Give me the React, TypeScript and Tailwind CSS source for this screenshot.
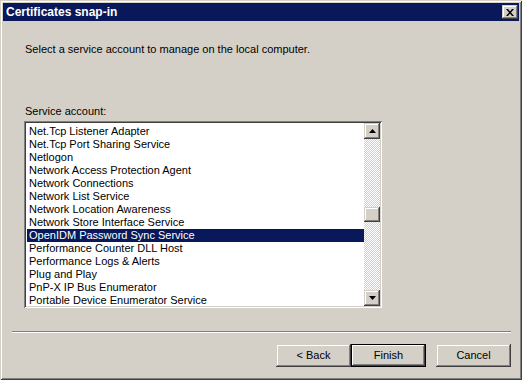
import React from 'react';

const items = [
  'Net.Tcp Listener Adapter',
  'Net.Tcp Port Sharing Service',
  'Netlogon',
  'Network Access Protection Agent',
  'Network Connections',
  'Network List Service',
  'Network Location Awareness',
  'Network Store Interface Service',
  'OpenIDM Password Sync Service',
  'Performance Counter DLL Host',
  'Performance Logs & Alerts',
  'Plug and Play',
  'PnP-X IP Bus Enumerator',
  'Portable Device Enumerator Service',
];

const raised =
  'shadow-[inset_-1px_-1px_#404040,inset_1px_1px_#d4d0c8,inset_-2px_-2px_#808080,inset_2px_2px_#ffffff]';

const ScrollButton = ({ down }: { down?: boolean }) => (
  <div className={`h-[16px] w-[16px] shrink-0 bg-[#d4d0c8] flex items-center justify-center ${raised}`}>
    <svg width="7" height="4" viewBox="0 0 7 4">
      {down ? <polygon points="0,0 7,0 3.5,4" fill="#000" /> : <polygon points="3.5,0 7,4 0,4" fill="#000" />}
    </svg>
  </div>
);

const Button = ({ label, def }: { label: string; def?: boolean }) => (
  <button
    className={`h-[23px] w-[75px] bg-[#d4d0c8] text-[11px] text-black ${
      def
        ? 'border border-black shadow-[inset_-1px_-1px_#404040,inset_1px_1px_#ffffff,inset_-2px_-2px_#808080]'
        : raised
    }`}
  >
    {label}
  </button>
);

export default function App() {
  return (
    <div
      className="w-[522px] h-[380px] bg-[#d4d0c8] p-[3px] flex flex-col overflow-hidden shadow-[inset_1px_1px_#d4d0c8,inset_-1px_-1px_#404040,inset_2px_2px_#ffffff,inset_-2px_-2px_#808080]"
      style={{ fontFamily: "'Liberation Sans', Arial, sans-serif" }}
    >
      {/* Title bar */}
      <div className="h-[18px] bg-[#08185a] flex items-center justify-between pl-[3px] pr-[1px] shrink-0">
        <span className="text-white text-[12px] font-bold">Certificates snap-in</span>
        <div className={`h-[14px] w-[16px] bg-[#d4d0c8] flex items-center justify-center ${raised}`}>
          <svg width="8" height="7" viewBox="0 0 8 7">
            <path d="M0 0h2l2 2.5L6 0h2L5 3.5 8 7H6L4 4.5 2 7H0l3-3.5z" fill="#000" />
          </svg>
        </div>
      </div>

      {/* Body */}
      <div className="flex flex-col pl-[22px] pt-[22px]">
        <p className="text-[11px] leading-[13px] text-black">Select a service account to manage on the local computer.</p>
        <p className="text-[11px] leading-[13px] text-black mt-[49px]">Service account:</p>

        <div className="mt-[3px] w-[358px] h-[187px] flex shadow-[inset_1px_1px_#808080,inset_-1px_-1px_#ffffff,inset_2px_2px_#404040,inset_-2px_-2px_#d4d0c8] p-[2px] -ml-[1px]">
          <div className="flex-1 bg-white overflow-hidden pt-[2px]">
            {items.map((it, i) => (
              <div
                key={it}
                className={`h-[13px] leading-[13px] text-[11px] pl-[2px] ml-[1px] whitespace-nowrap ${
                  i === 8 ? 'bg-[#08185a] text-white' : 'text-black'
                }`}
              >
                {it}
              </div>
            ))}
          </div>
          <div className="w-[16px] flex flex-col bg-[image:repeating-conic-gradient(#ffffff_0_25%,#d4d0c8_0_50%)] bg-[length:2px_2px]">
            <ScrollButton />
            <div className="h-[68px]" />
            <div className={`h-[15px] w-[16px] bg-[#d4d0c8] ${raised}`} />
            <div className="flex-1" />
            <ScrollButton down />
          </div>
        </div>
      </div>

      {/* Separator */}
      <div className="mt-[23px] ml-[9px] mr-[8px] h-[2px] border-t border-t-[#808080] border-b border-b-white" />

      {/* Buttons */}
      <div className="flex justify-end mt-[11px] pr-[8px]">
        <Button label="< Back" />
        <Button label="Finish" def />
        <div className="w-[10px]" />
        <Button label="Cancel" />
      </div>
    </div>
  );
}
